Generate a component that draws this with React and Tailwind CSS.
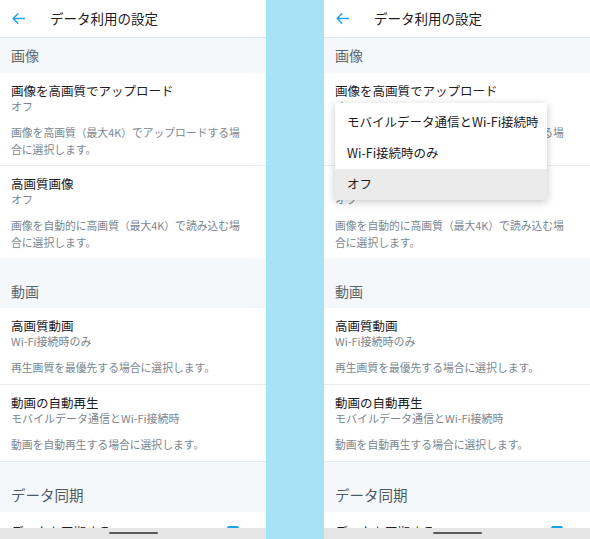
import React from "react";

const FONT = { fontFamily: '"Noto Sans CJK JP", "Noto Sans", sans-serif' };

function BackArrow() {
  return (
    <svg width="13" height="11" viewBox="0 0 13 11" fill="none" className="shrink-0">
      <path d="M12.5 5.5H1.2M5.8 0.8L1.2 5.5L5.8 10.2" stroke="#1da1f2" strokeWidth="1.4" strokeLinecap="round" strokeLinejoin="round" />
    </svg>
  );
}

function SectionHeader({ children, tall }) {
  return (
    <div
      className={`bg-[#f5f8fa] px-[11px] text-[14px] leading-[17px] text-[#5b6770] ${
        tall ? "pt-[25px] pb-[8px]" : "pt-[9px] pb-[9px]"
      }`}
    >
      {children}
    </div>
  );
}

function SettingRow({ title, value, desc, divider = true, single = false }) {
  return (
    <div
      className={`bg-white px-[11px] pt-[9px] ${single ? "pb-[8px]" : "pb-[7px]"} ${
        divider ? "border-b border-[#e6ecf0]" : ""
      }`}
    >
      <div className="whitespace-nowrap text-[12.5px] leading-[17px] text-[#1c2023]">{title}</div>
      <div className="whitespace-nowrap text-[11px] leading-[15px] text-[#7b8790]">{value}</div>
      <div className="mt-[10px] whitespace-nowrap text-[10.8px] leading-[17px] text-[#7b8790]">{desc}</div>
    </div>
  );
}

function QualityMenu() {
  const items = ["モバイルデータ通信とWi-Fi接続時", "Wi-Fi接続時のみ", "オフ"];
  return (
    <div className="absolute left-[11px] top-[103px] w-[212px] bg-white pt-[4px] shadow-[0_2px_8px_rgba(0,0,0,0.22)]">
      {items.map((label, i) => (
        <div
          key={label}
          className={`flex h-[31px] items-center whitespace-nowrap px-[12px] text-[12.5px] text-[#1c2023] ${
            i === items.length - 1 ? "bg-[#ebebeb]" : ""
          }`}
        >
          {label}
        </div>
      ))}
    </div>
  );
}

function PhoneScreen({ showMenu }) {
  return (
    <div className="relative flex h-[539px] w-[266px] shrink-0 flex-col overflow-hidden bg-white" style={FONT}>
      {/* app bar */}
      <div className="flex h-[38px] shrink-0 items-center gap-[25px] border-b border-[#e1e8ed] bg-white pl-[12px]">
        <BackArrow />
        <span className="text-[13.5px] text-[#1c2023]">データ利用の設定</span>
      </div>

      <div className="flex-1 overflow-hidden">
        <SectionHeader>画像</SectionHeader>
        <SettingRow
          title="画像を高画質でアップロード"
          value="オフ"
          desc={
            <>
              画像を高画質（最大4K）でアップロードする場
              <br />
              合に選択します。
            </>
          }
        />
        <SettingRow
          title="高画質画像"
          value="オフ"
          divider={false}
          desc={
            <>
              画像を自動的に高画質（最大4K）で読み込む場
              <br />
              合に選択します。
            </>
          }
        />

        <SectionHeader tall>動画</SectionHeader>
        <SettingRow single title="高画質動画" value="Wi-Fi接続時のみ" desc="再生画質を最優先する場合に選択します。" />
        <SettingRow
          single
          title="動画の自動再生"
          value="モバイルデータ通信とWi-Fi接続時"
          desc="動画を自動再生する場合に選択します。"
        />

        <div className="bg-[#f5f8fa] px-[11px] pt-[24px] pb-[8px] text-[14.5px] leading-[18px] text-[#4f5a62]">
          データ同期
        </div>
        <div className="relative bg-white px-[11px] pt-[11px] pb-[9px]">
          <div className="text-[12.5px] leading-[17px] text-[#1c2023]">データを同期する</div>
          <div className="absolute right-[27px] top-[14px] h-[13px] w-[12px] rounded-[2px] border-[1.5px] border-[#1da1f2] bg-[#1da1f2]" />
        </div>
      </div>

      {/* gesture bar */}
      <div className="flex h-[11px] shrink-0 justify-center bg-[#e6e6e6] pt-[4px]">
        <div className="h-[2px] w-[49px] rounded-full bg-[#5a5a5a]" />
      </div>

      {showMenu && <QualityMenu />}
    </div>
  );
}

export default function App() {
  return (
    <div className="flex h-[539px] w-[590px] overflow-hidden bg-[#a7e3f6]">
      <PhoneScreen />
      <div className="w-[58px] shrink-0 bg-[#a7e3f6]" />
      <PhoneScreen showMenu />
    </div>
  );
}
